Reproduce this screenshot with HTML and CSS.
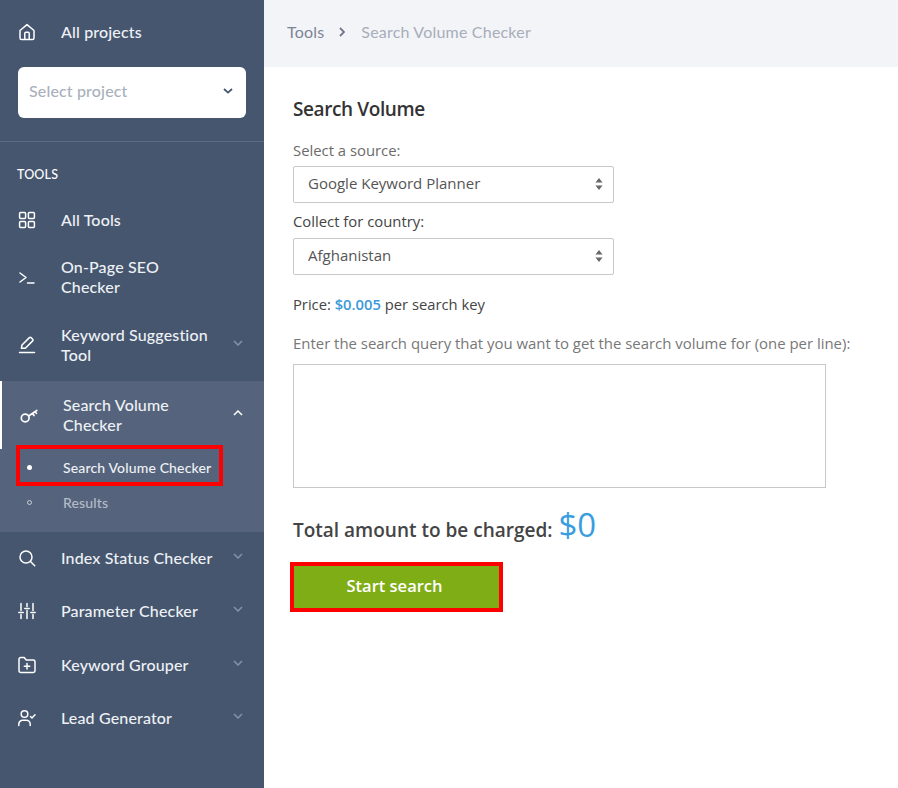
FILE: index.html
```html
<!DOCTYPE html>
<html lang="en">
<head>
<meta charset="utf-8">
<title>Search Volume Checker</title>
<link rel="stylesheet" href="styles.css">
</head>
<body>
<div class="app">
  <aside class="sidebar">
    <div class="top">
      <a class="projects">
        <svg class="icon" viewBox="0 0 18 18"><path d="M2 7.5 9 1.6l7 5.9V15a1.6 1.6 0 0 1-1.6 1.6H3.6A1.6 1.6 0 0 1 2 15Z M6.8 16.6V10.2a1 1 0 0 1 1-1h2.4a1 1 0 0 1 1 1v6.4"/></svg>
        <span>All projects</span>
      </a>
      <div class="project-select">
        <span>Select project</span>
        <svg class="select-chev" viewBox="0 0 10 6"><path d="M1 1l4 3.6L9 1"/></svg>
      </div>
    </div>
    <div class="tools-title">TOOLS</div>
    <nav class="nav">
      <a class="item single">
        <svg class="icon" viewBox="0 0 18 18"><rect x="1.6" y="1.6" width="6" height="6" rx="1"/><rect x="10.4" y="1.6" width="6" height="6" rx="1"/><rect x="1.6" y="10.4" width="6" height="6" rx="1"/><rect x="10.4" y="10.4" width="6" height="6" rx="1"/></svg>
        <span class="label">All Tools</span>
      </a>
      <a class="item double">
        <svg class="icon" viewBox="0 0 18 18"><path d="M2 5l6 4.500-6 4.500M9.500 15h6.500"/></svg>
        <span class="label">On-Page SEO Checker</span>
      </a>
      <a class="item double">
        <svg class="icon" viewBox="0 0 18 18"><path d="M3.4 12.2 4 9l7.4-7.4a1.2 1.2 0 0 1 1.7 0l1.6 1.6a1.2 1.2 0 0 1 0 1.7L7.3 12.3l-3.9 0ZM1.5 16.5h15"/></svg>
        <span class="label">Keyword Suggestion Tool</span>
        <svg class="chev dim" viewBox="0 0 10 6"><path d="M1 1l4 4 4-4"/></svg>
      </a>
      <div class="group">
        <a class="item double head">
          <svg class="icon key" viewBox="0 0 18 18"><circle cx="5.2" cy="12" r="3.9"/><path d="M8.600 10 16.800 4.500M12.600 7.300l1.400 2.200M15.200 5.600l1.200 1.800"/></svg>
          <span class="label">Search Volume Checker</span>
          <svg class="chev" viewBox="0 0 10 6"><path d="M1 5l4-4 4 4"/></svg>
        </a>
        <a class="sub current"><i class="dot"></i><span>Search Volume Checker</span></a>
        <a class="sub muted"><i class="dot ring"></i><span>Results</span></a>
      </div>
      <a class="item tool">
        <svg class="icon" viewBox="0 0 18 18"><circle cx="8" cy="8" r="6"/><path d="m12.5 12.5 4.2 4.2"/></svg>
        <span class="label">Index Status Checker</span>
        <svg class="chev dim" viewBox="0 0 10 6"><path d="M1 1l4 4 4-4"/></svg>
      </a>
      <a class="item tool">
        <svg class="icon" viewBox="0 0 18 18"><path d="M3 1.500v7M3 12.500v4M9 1.500v3M9 8.500v8M15 1.500v7M15 12.500v4M.8 10.500h4.400M6.800 6.500h4.400M12.800 10.500h4.400"/></svg>
        <span class="label">Parameter Checker</span>
        <svg class="chev dim" viewBox="0 0 10 6"><path d="M1 1l4 4 4-4"/></svg>
      </a>
      <a class="item tool">
        <svg class="icon" viewBox="0 0 18 18"><path d="M1 3.200A1.700 1.700 0 0 1 2.700 1.500h3.500l2 2.500h7.100A1.700 1.700 0 0 1 17 5.700v9.100a1.700 1.700 0 0 1-1.700 1.700H2.700A1.700 1.700 0 0 1 1 14.800ZM9 7.500v5.500M6.300 10.200h5.400"/></svg>
        <span class="label">Keyword Grouper</span>
        <svg class="chev dim" viewBox="0 0 10 6"><path d="M1 1l4 4 4-4"/></svg>
      </a>
      <a class="item tool">
        <svg class="icon" viewBox="0 0 18 18"><circle cx="6.500" cy="5" r="3.300"/><path d="M.8 16.500v-1.300a4 4 0 0 1 4-4h3.400a4 4 0 0 1 4 4v1.300M12.500 7.500l1.500 1.500 3-3.200"/></svg>
        <span class="label">Lead Generator</span>
        <svg class="chev dim" viewBox="0 0 10 6"><path d="M1 1l4 4 4-4"/></svg>
      </a>
    </nav>
  </aside>
  <main class="main">
    <header class="crumbs">
      <span class="crumb">Tools</span>
      <svg class="crumb-sep" viewBox="0 0 6 10"><path d="M1 1l4 4-4 4"/></svg>
      <span class="crumb last">Search Volume Checker</span>
    </header>
    <section class="content">
      <h1 class="title">Search Volume</h1>
      <label class="field-label muted-label">Select a source:</label>
      <div class="select-wrap">
        <select class="select"><option>Google Keyword Planner</option></select>
        <svg class="updown" viewBox="0 0 8 12"><path d="M4 0l3.500 4.500h-7zM4 12 .5 7.500h7z"/></svg>
      </div>
      <label class="field-label">Collect for country:</label>
      <div class="select-wrap">
        <select class="select"><option>Afghanistan</option></select>
        <svg class="updown" viewBox="0 0 8 12"><path d="M4 0l3.500 4.500h-7zM4 12 .5 7.500h7z"/></svg>
      </div>
      <p class="price">Price: <b>$0.005</b> per search key</p>
      <p class="hint">Enter the search query that you want to get the search volume for (one per line):</p>
      <textarea class="query"></textarea>
      <p class="total">Total amount to be charged: <span class="amount">$0</span></p>
      <button class="start" type="button">Start search</button>
    </section>
  </main>
</div>
</body>
</html>
```
FILE: styles.css
```css
* , *::after { box-sizing: border-box; }
html, body { margin: 0; height: 100%; }
body { font-family: "Open Sans", "Noto Sans", sans-serif; background: #fff; overflow: hidden; }
.app { display: flex; height: 788px; }

.sidebar { width: 264px; flex: none; background: #46566f; color: #eef1f5; font-family: Lato, "Open Sans", sans-serif; font-weight: 500; font-size: 16px; line-height: 20px; letter-spacing: .15px; }
.top { padding: 22px 18px 23px; border-bottom: 1px solid #5c6b84; height: 142px; }
.projects { display: flex; align-items: center; gap: 25px; height: 20px; }
.icon { width: 18px; height: 18px; flex: none; margin-right: 25px; fill: none; stroke: #fff; stroke-width: 1.5; stroke-linecap: round; stroke-linejoin: round; }
.projects .icon { margin-right: 0; }
.project-select { margin-top: 25px; height: 51px; background: #fff; border-radius: 6px; display: flex; align-items: center; justify-content: space-between; padding: 0 13px 3px 11px; color: #a9b0bc; }
.select-chev { width: 10px; height: 6px; fill: none; stroke: #46566f; stroke-width: 1.800; }
.tools-title { margin: 25px 0 0 17px; font-size: 12.5px; line-height: 16px; font-weight: 500; color: #fff; }
.nav { margin-top: 14px; display: flex; flex-direction: column; }
.item { display: flex; align-items: center; padding: 0 21px 0 18px; position: relative; }
.item.single { height: 46px; }
.item.double { height: 68px; }
.item.tool { height: 53.33px; padding-bottom: 1px; }
.item.tool .label { white-space: nowrap; }
.label { width: 155px; }
.chev { width: 10px; height: 6px; margin-left: auto; flex: none; fill: none; stroke: #fff; stroke-width: 1.500; margin-top: -4px; }
.chev.dim { stroke: #8592a6; }
.group { margin-top: 2px; background: #55647c; height: 151px; }
.item.head { border-left: 2px solid #fff; padding-left: 18px; margin-bottom: 1px; }
.item.head .label { width: 150px; }
.item.head .key { stroke-width: 1.700; }
.sub { display: flex; align-items: center; height: 35px; padding-left: 27px; gap: 31px; font-size: 14px; color: #eef1f5; position: relative; }
.sub.muted { color: #b5bcc9; }
.sub.current { z-index: 1; }
.sub.current::after { content: ""; position: absolute; left: 16px; top: -5px; width: 207px; height: 41px; border: 4px solid #f00; }
.dot { width: 5px; height: 5px; border-radius: 50%; background: #fff; flex: none; }
.dot.ring { background: none; border: 1px solid #c9ced8; }

.main { flex: 1; min-width: 0; }
.crumbs { height: 67px; background: #f3f4f8; display: flex; align-items: center; padding: 0 0 4px 23px; font-size: 16px; letter-spacing: .2px; font-family: Lato, "Open Sans", sans-serif; color: #7b8494; }
.crumb-sep { width: 6px; height: 10px; margin: 0 16px 0 15px; fill: none; stroke: #6f7888; stroke-width: 1.800; }
.crumb.last { color: #a7adb9; }
.content { padding: 29px 0 0 29px; color: #444; font-size: 14.85px; }
.title { margin: 0; font-size: 19px; letter-spacing: -.4px; line-height: 27px; font-weight: 600; color: #333; }
.field-label { display: block; line-height: 20px; }
.muted-label { margin-top: 17px; margin-bottom: 6px; color: #6b6b6b; }
.select-wrap + .field-label { margin-top: 8px; margin-bottom: 7px; }
.select-wrap { position: relative; width: 321px; height: 37px; }
.select { appearance: none; width: 100%; height: 37px; border: 1px solid #c8c8c8; border-radius: 2px; background: #fff; padding: 0 14px 3px; font: inherit; font-size: 15px; color: #555; }
.updown { position: absolute; right: 11px; top: 12px; width: 8px; height: 12px; fill: #666; pointer-events: none; }
.price { margin: 19px 0 0; line-height: 20px; font-size: 14.75px; }
.price b { color: #3a9ad9; font-weight: 600; }
.hint { margin: 19px 0 0; line-height: 20px; color: #777; font-size: 14.93px; }
.query { display: block; margin-top: 11px; width: 533px; height: 124px; border: 1px solid #c8c8c8; background: #fff; resize: none; border-radius: 0; }
.total { margin: 15px 0 0; font-size: 19px; font-weight: 600; line-height: 44px; color: #444; }
.amount { font-size: 33px; font-weight: 400; color: #3a9de0; margin-left: 1px; }
.start { display: block; margin: 10px 0 0 -3px; width: 213px; height: 50px; border: 4px solid #f00; background: #7fad16; color: #fff; font: 600 16.5px "Open Sans", sans-serif; padding: 0 4px 3px 0; }
```
